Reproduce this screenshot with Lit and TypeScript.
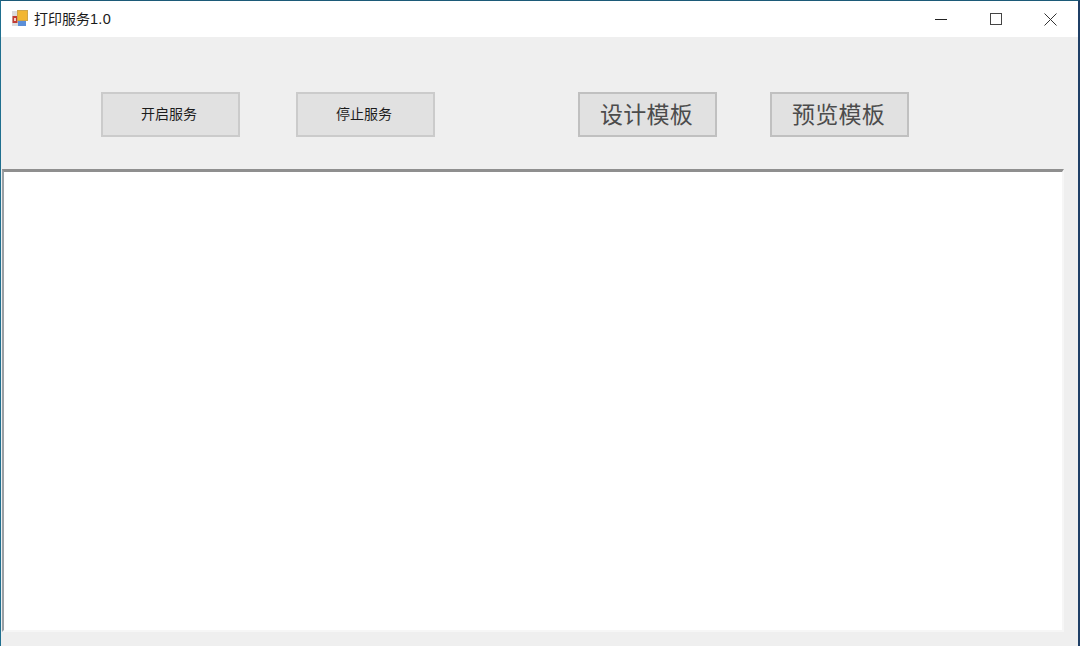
import { LitElement, html, css } from 'lit';
import { customElement } from 'lit/decorators.js';

@customElement('app-root')
export class AppRoot extends LitElement {
  static styles = css`
    :host {
      display: block;
      width: 1080px;
      height: 646px;
      overflow: hidden;
      font-family: 'Liberation Sans', 'Noto Sans CJK SC', sans-serif;
    }

    .window {
      box-sizing: border-box;
      display: flex;
      flex-direction: column;
      width: 1080px;
      height: 646px;
      background: #efefef;
      border-top: 1px solid #1c5a78;
      border-left: 1px solid #1f6f8f;
      border-right: 2px solid #1f3f66;
    }

    .titlebar {
      display: flex;
      align-items: center;
      height: 36px;
      flex: none;
      background: #fff;
    }

    .app-icon {
      margin: -1px 0 0 10px;
      width: 18px;
      height: 18px;
      flex: none;
    }

    .title {
      margin: -3px 0 0 5px;
      font-size: 14px;
      color: #1a1a1a;
      white-space: nowrap;
    }

    .version {
      font-size: 14.5px;
      letter-spacing: 0.3px;
    }

    .controls {
      display: flex;
      margin-left: auto;
    }

    .control {
      display: flex;
      align-items: center;
      justify-content: center;
      width: 55px;
      height: 36px;
    }

    .toolbar {
      display: flex;
      align-items: flex-start;
      flex: none;
      height: 132px;
      padding: 55px 0 0 100px;
      box-sizing: border-box;
    }

    .btn {
      box-sizing: border-box;
      display: flex;
      align-items: center;
      justify-content: center;
      width: 139px;
      height: 45px;
      flex: none;
      padding: 0 3px 3px 0;
      background: #e1e1e1;
      border: 2px solid #cbcbcb;
      font-size: 14px;
      color: #1c1c1c;
    }

    .btn.large {
      padding: 0 2px 3px 0;
      font-size: 23px;
      font-weight: 400;
      letter-spacing: 0.2px;
      color: #4c4c4c;
      border-color: #c0c0c0;
    }

    .gap-a {
      margin-left: 56px;
    }

    .gap-b {
      margin-left: 143px;
    }

    .gap-c {
      margin-left: 53px;
    }

    .log {
      box-sizing: border-box;
      width: 1062px;
      height: 463px;
      flex: none;
      margin-left: 1px;
      background: #fff;
      border-top: 3px solid #8f8f8f;
      border-left: 2px solid #9aa0a5;
      border-right: 2px solid #f6f6f6;
      border-bottom: 2px solid #f6f6f6;
    }
  `;

  render() {
    return html`
      <div class="window">
        <div class="titlebar">
          <svg class="app-icon" viewBox="0 0 18 18">
            <rect x="1" y="1" width="6" height="15" fill="#dcdcdc" />
            <rect x="1.5" y="6" width="5" height="7" fill="#c23b32" />
            <rect x="3" y="8" width="2" height="3" fill="#f0d0c8" />
            <rect x="6.5" y="0.5" width="10" height="10" fill="#f2b632" stroke="#cfa54a" />
            <rect x="7" y="11" width="8" height="5" fill="#5b8fd8" />
          </svg>
          <span class="title">打印服务<span class="version">1.0</span></span>
          <div class="controls">
            <div class="control">
              <svg width="12" height="12" viewBox="0 0 12 12"><path d="M0 6.5H12" stroke="#222" /></svg>
            </div>
            <div class="control">
              <svg width="12" height="12" viewBox="0 0 12 12"><rect x="0.5" y="0.5" width="11" height="11" fill="none" stroke="#444" /></svg>
            </div>
            <div class="control">
              <svg width="13" height="13" viewBox="0 0 13 13"><path d="M0.5 0.5L12.5 12.5M12.5 0.5L0.5 12.5" stroke="#333" /></svg>
            </div>
          </div>
        </div>
        <div class="toolbar">
          <div class="btn">开启服务</div>
          <div class="btn gap-a">停止服务</div>
          <div class="btn large gap-b">设计模板</div>
          <div class="btn large gap-c">预览模板</div>
        </div>
        <div class="log"></div>
      </div>
    `;
  }
}
